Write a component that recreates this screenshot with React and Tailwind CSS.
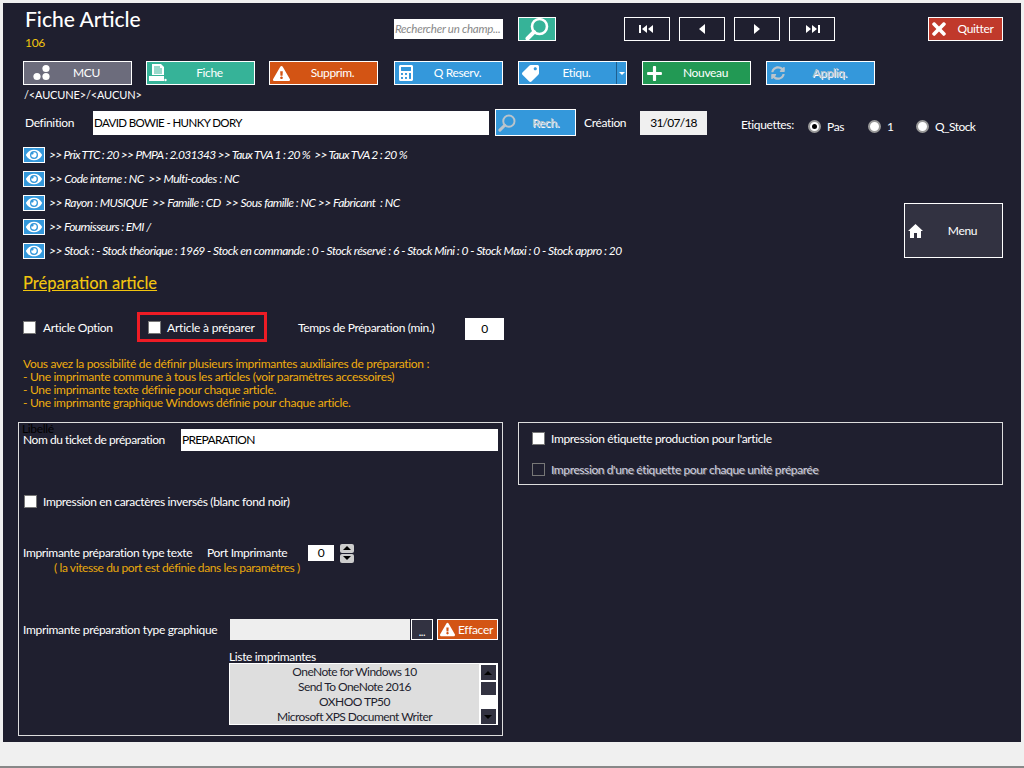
import React from 'react';
import { FaExclamationTriangle, FaEye, FaTag, FaCalculator, FaPlus, FaSyncAlt, FaTimes } from 'react-icons/fa';

const Loupe = ({ size = 24, color = 'white' }) => (
  <svg width={size} height={size} viewBox="0 0 24 24" fill="none" stroke={color}>
    <circle cx="14.5" cy="9.5" r="7.5" strokeWidth="2.6" />
    <path d="M9 15 L2.5 21.5" strokeWidth="4" strokeLinecap="round" />
  </svg>
);

const Dots = () => (
  <svg width="18" height="18" viewBox="0 0 18 18" fill="white" className="translate-x-[7px]">
    <circle cx="13" cy="4.5" r="3.6" />
    <circle cx="4" cy="12.5" r="3.6" />
    <circle cx="13" cy="12.5" r="3.6" />
  </svg>
);

const Printer = () => (
  <svg width="18" height="18" viewBox="0 0 18 18" fill="white">
    <path d="M3 0h9l3 3v8H3z" />
    <path d="M5 3h6M5 5h8M5 7h8M5 9h8" stroke="#36b398" strokeWidth="1" />
    <path d="M0 12h15v5H0z" />
    <circle cx="16.5" cy="16" r="1.2" />
  </svg>
);

const Home = () => (
  <svg width="15" height="14" viewBox="0 0 15 14" fill="white" className="ml-[3px] shrink-0">
    <path d="M7.5 0 15 7h-2v7H9V9H6v5H2V7H0z" />
  </svg>
);

// boutons de navigation
const Nav = ({ d }) => (
  <button className="w-[46px] h-6 border border-white flex items-center justify-center">
    <svg width="16" height="10" viewBox="0 0 16 10" fill="white"><path d={d} /></svg>
  </button>
);

const Btn = ({ icon, label, bg, disabled, children }) => (
  <div className={`w-[109px] h-6 border border-white flex items-center shrink-0 ${bg}`}>
    <span className="w-[18px] ml-[2px] -mr-[2px] flex items-center justify-center shrink-0">{icon}</span>
    <span className={`flex-1 text-center text-[12px] ${disabled ? 'text-[#b9c4cc] [text-shadow:1px_1px_0_#fff]' : 'text-white'}`}>{label}</span>
    {children}
  </div>
);

const Check = ({ disabled }) => (
  <span className={`w-[13px] h-[13px] border shrink-0 ${disabled ? 'border-[#777] bg-transparent' : 'border-[#777] bg-white'}`} />
);

const Radio = ({ on }) => (
  <span className="w-[13px] h-[13px] rounded-full bg-white border-2 border-[#999] flex items-center justify-center shrink-0">
    {on && <span className="w-[5px] h-[5px] rounded-full bg-black" />}
  </span>
);

const EyeRow = ({ track, children }) => (
  <div className="flex items-center h-4">
    <span className="w-[22px] h-4 bg-[#3498db] border border-white flex items-center justify-center shrink-0">
      <FaEye size={16} color="white" />
    </span>
    <span className={`ml-[4px] text-[12px] italic text-white whitespace-pre ${track}`}>{children}</span>
  </div>
);

const imprimantes = ['OneNote for Windows 10', 'Send To OneNote 2016', 'OXHOO TP50', 'Microsoft XPS Document Writer'];

export default function App() {
  return (
    <div className="w-[1024px] h-[768px] bg-[#f0f0f0] pt-[3px] px-[3px] flex flex-col text-white overflow-hidden font-['Lato','Liberation_Sans',sans-serif] text-[12px] leading-[14px] tracking-[-0.35px] border-b-2 border-[#888]">
      <div className="h-[739px] bg-[#1f1f2f] pl-5 pr-[18px] shrink-0">
        {/* en-tete */}
        <div className="h-[58px] flex items-start">
          <div className="w-[371px] pl-[2px] pt-[4px] tracking-normal">
            <div className="text-[21px] leading-6 font-medium">Fiche Article</div>
            <div className="text-[#f1c40f] text-[12px] mt-[5px] tracking-[-0.3px]">106</div>
          </div>
          <div className="w-[109px] h-5 mt-4 bg-white text-[#888] italic text-[11.5px] leading-5 tracking-[-0.25px] whitespace-nowrap pl-[1px]">Rechercher un champ...</div>
          <button className="w-[38px] h-6 mt-[14px] ml-[15px] bg-[#36b398] border border-white flex items-center justify-center"><Loupe size={24} /></button>
          <div className="flex gap-[9px] mt-[14px] ml-[68px]">
            <Nav d="M0 1h2v8H0zM8 1v8L3 5zM14 1v8L9 5z" />
            <Nav d="M11 0v10L5 5z" />
            <Nav d="M5 0v10l6-5z" />
            <Nav d="M2 1v8l5-4zM8 1v8l5-4zM14 1h2v8h-2z" />
          </div>
          <div className="w-[75px] h-6 mt-[14px] ml-auto bg-[#c0392b] border border-white flex items-center">
            <FaTimes size={20} color="white" className="shrink-0" />
            <span className="flex-1 text-center">Quitter</span>
          </div>
        </div>

        {/* boutons */}
        <div className="flex h-6">
          <Btn icon={<Dots />} label="MCU" bg="bg-[#6c6c7c]" />
          <div className="ml-[14px]"><Btn icon={<Printer />} label="Fiche" bg="bg-[#36b398]" /></div>
          <div className="ml-[14px]"><Btn icon={<FaExclamationTriangle size={17} color="white" />} label="Supprim." bg="bg-[#d35414]" /></div>
          <div className="ml-4"><Btn icon={<FaCalculator size={16} color="white" />} label="Q Reserv." bg="bg-[#3498db]" /></div>
          <div className="ml-[15px]">
            <Btn icon={<FaTag size={17} color="white" className="-scale-x-100" />} label="Etiqu." bg="bg-[#3498db]">
              <span className="w-[10px] h-full border-l border-[#1f5f8f] flex items-center justify-center">
                <span className="border-x-[3px] border-x-transparent border-t-[3px] border-t-white" />
              </span>
            </Btn>
          </div>
          <div className="ml-[15px]"><Btn icon={<FaPlus size={17} color="white" />} label="Nouveau" bg="bg-[#229954]" /></div>
          <div className="ml-[15px]"><Btn icon={<FaSyncAlt size={14} color="#b9c4cc" />} label="Appliq." bg="bg-[#3498db]" disabled /></div>
        </div>

        <div className="mt-[3px] h-[14px] pl-[1px] text-[11px] leading-[14px] tracking-[-0.15px]">{'/<AUCUNE>/<AUCUN>'}</div>

        {/* definition */}
        <div className="mt-[7px] h-[27px] flex items-center">
          <span className="w-[70px] pl-[2px] shrink-0">Definition</span>
          <div className="w-[396px] h-6 bg-white text-black text-[11.5px] leading-6 pl-[1px] tracking-[-0.6px] shrink-0">DAVID BOWIE - HUNKY DORY</div>
          <div className="w-[81px] h-[27px] ml-[6px] bg-[#3498db] border border-white flex items-center shrink-0">
            <span className="ml-[2px]"><Loupe size={18} color="#b9c4cc" /></span>
            <span className="flex-1 text-center text-[#b9c4cc] [text-shadow:1px_1px_0_#fff]">Rech.</span>
          </div>
          <span className="ml-2 w-[56px] shrink-0">Création</span>
          <div className="w-[67px] h-6 bg-[#f0f0f0] text-black text-center leading-6 tracking-[-0.75px] shrink-0">31/07/18</div>
          <span className="ml-[34px] w-[67px] mt-[4px] shrink-0">Etiquettes:</span>
          <div className="flex items-center mt-[8px]">
            <Radio on />
            <span className="ml-[6px] w-[41px]">Pas</span>
            <Radio />
            <span className="ml-[6px] w-[29px]">1</span>
            <Radio />
            <span className="ml-[6px] tracking-[-0.55px]">Q_Stock</span>
          </div>
        </div>

        {/* infos article */}
        <div className="mt-[11px] flex">
          <div className="flex-1 flex flex-col gap-2">
            <EyeRow track="tracking-[-0.71px]">{'>> Prix TTC : 20 >> PMPA : 2.031343 >> Taux TVA 1 : 20 %  >> Taux TVA 2 : 20 %'}</EyeRow>
            <EyeRow track="tracking-[-0.51px]">{'>> Code interne : NC  >> Multi-codes : NC'}</EyeRow>
            <EyeRow track="tracking-[-0.52px]">{'>> Rayon : MUSIQUE  >> Famille : CD  >> Sous famille : NC >> Fabricant  : NC'}</EyeRow>
            <EyeRow track="tracking-[-0.6px]">{'>> Fournisseurs : EMI /'}</EyeRow>
            <EyeRow track="tracking-[-0.5px]">{'>> Stock : - Stock théorique : 1969 - Stock en commande : 0 - Stock réservé : 6 - Stock Mini : 0 - Stock Maxi : 0 - Stock appro : 20'}</EyeRow>
          </div>
          <div className="w-[99px] h-[55px] mt-[56px] bg-[#323241] border border-white flex items-center shrink-0">
            <Home />
            <span className="flex-1 text-center">Menu</span>
          </div>
        </div>

        <div className="mt-4 h-[17px] text-[16.5px] leading-[17px] font-medium tracking-normal text-[#f1c40f] underline">Préparation article</div>

        {/* options */}
        <div className="mt-5 h-[30px] flex items-center">
          <Check />
          <span className="ml-[7px] w-[94px] mt-[2px]">Article Option</span>
          <div className="w-[130px] h-[30px] border-[3px] border-[#ee1c25] flex items-center pl-2">
            <Check />
            <span className="ml-[6px] mt-[2px] tracking-[-0.2px]">Article à préparer</span>
          </div>
          <span className="ml-[31px] w-[167px] mt-[2px]">Temps de Préparation (min.)</span>
          <div className="w-[39px] h-[22px] mt-[4px] bg-white text-black text-center leading-[22px]">0</div>
        </div>

        <div className="mt-[15px] text-[#f0ad0e] leading-[13px] tracking-[-0.3px]">
          <div>Vous avez la possibilité de définir plusieurs imprimantes auxiliaires de préparation :</div>
          <div>- Une imprimante commune à tous les articles (voir paramètres accessoires)</div>
          <div>- Une imprimante texte définie pour chaque article.</div>
          <div>- Une imprimante graphique Windows définie pour chaque article.</div>
        </div>

        {/* panneaux */}
        <div className="mt-[13px] flex items-start -ml-[5px]">
          <div className="relative w-[485px] h-[314px] border border-[#ddd] pl-1 pr-1 shrink-0">
            <span className="absolute left-[3px] -top-[1px] text-black">Libellé</span>
            <div className="mt-[6px] h-[22px] flex items-center">
              <span className="w-[158px] shrink-0 tracking-[-0.45px]">Nom du ticket de préparation</span>
              <div className="w-[317px] h-[22px] bg-white text-black leading-[22px] pl-[1px] tracking-[-0.7px]">PREPARATION</div>
            </div>
            <div className="mt-[44px] h-[13px] flex items-center pl-[1px]">
              <Check />
              <span className="ml-[6px]">Impression en caractères inversés (blanc fond noir)</span>
            </div>
            <div className="mt-[35px] h-5 flex items-center">
              <span className="w-[184px] shrink-0">Imprimante préparation type texte</span>
              <span className="w-[101px] shrink-0">Port Imprimante</span>
              <div className="w-[26px] h-4 bg-white text-black text-center leading-4">0</div>
              <div className="ml-[6px] w-[14px] flex flex-col gap-[1px]">
                <span className="h-[9px] bg-[#ccc] rounded-[2px] flex items-center justify-center"><span className="border-x-[4px] border-x-transparent border-b-[4px] border-b-black" /></span>
                <span className="h-[9px] bg-[#ccc] rounded-[2px] flex items-center justify-center"><span className="border-x-[4px] border-x-transparent border-t-[4px] border-t-black" /></span>
              </div>
            </div>
            <div className="pl-[31px] text-[#e8a80c] mt-[-2px] whitespace-nowrap tracking-[-0.4px]">( la vitesse du port est définie dans les paramètres )</div>
            <div className="mt-[44px] h-[21px] flex items-center">
              <span className="w-[207px] shrink-0 tracking-[-0.32px]">Imprimante préparation type graphique</span>
              <div className="w-[180px] h-[21px] bg-[#eee]" />
              <div className="w-[22px] h-[21px] ml-[1px] bg-[#323241] border border-white text-center text-[11px] leading-[24px]">...</div>
              <div className="w-[61px] h-[21px] ml-1 bg-[#d35414] border border-white flex items-center">
                <FaExclamationTriangle size={15} color="white" className="ml-[2px] shrink-0" />
                <span className="ml-[3px] whitespace-nowrap">Effacer</span>
              </div>
            </div>
            <div className="ml-[206px] mt-[10px] h-[13px] leading-[13px]">Liste imprimantes</div>
            <div className="ml-[206px] w-[269px] h-[62px] bg-[#dedede] border border-white flex text-[#1f1f2f]">
              <div className="flex-1 text-center leading-[15px] tracking-[-0.55px]">
                {imprimantes.map((p) => <div key={p}>{p}</div>)}
              </div>
              <div className="w-[18px] bg-white flex flex-col items-center shrink-0 px-[1px] pt-[1px]">
                <span className="w-[15px] h-[15px] bg-[#323241] flex items-center justify-center"><span className="border-x-[4px] border-x-transparent border-b-[4px] border-b-black" /></span>
                <span className="w-[15px] h-[13px] mt-[2px] bg-[#323241]" />
                <span className="w-[15px] h-[15px] mt-auto bg-[#323241] flex items-center justify-center"><span className="border-x-[4px] border-x-transparent border-t-[4px] border-t-black" /></span>
              </div>
            </div>
          </div>
          <div className="ml-[15px] w-[485px] h-[63px] border border-[#ddd] pl-[13px] pt-[9px] shrink-0">
            <div className="h-[13px] flex items-center">
              <Check />
              <span className="ml-[6px]">Impression étiquette production pour l'article</span>
            </div>
            <div className="mt-[18px] h-[13px] flex items-center">
              <Check disabled />
              <span className="ml-[6px] tracking-[-0.4px] text-[#d0d0e0] [text-shadow:1px_1px_0_#666]">Impression d'une étiquette pour chaque unité préparée</span>
            </div>
          </div>
        </div>
      </div>
    </div>
  );
}
